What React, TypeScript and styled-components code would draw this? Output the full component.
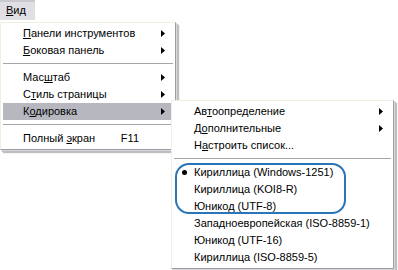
import React from 'react';
import styled, { createGlobalStyle } from 'styled-components';

const Global = createGlobalStyle`
  html, body { margin: 0; padding: 0; background: #fff; }
  body {
    font-family: "Liberation Sans", Arial, sans-serif;
    font-size: 11px;
    color: #000;
  }
`;

const Page = styled.div`
  position: relative;
  width: 398px;
  height: 270px;
  overflow: hidden;
  background: #fff;
`;

const MenuBar = styled.div`
  display: flex;
  height: 20px;
`;

const BarItem = styled.div`
  box-sizing: border-box;
  width: 35px;
  height: 20px;
  padding-left: 6px;
  background: #e0dfe3;
  border-top: 2px solid #c9c8ce;
  line-height: 17px;
`;

const Popup = styled.div<{ $left: number; $top: number; $width: number }>`
  position: absolute;
  left: ${p => p.$left}px;
  top: ${p => p.$top}px;
  width: ${p => p.$width}px;
  box-sizing: border-box;
  background: #fff;
  border: 1px solid;
  border-color: #f1efe2 #9d9da1 #9d9da1 #f1efe2;
  padding: 2px;
  display: flex;
  flex-direction: column;
  box-shadow: 1px 1px 0 #d8d7dc, 2px 2px 0 #bdbcc2, 3px 3px 1px rgba(0, 0, 0, 0.25);
`;

const Row = styled.div<{ $active?: boolean }>`
  display: grid;
  grid-template-columns: 20px 1fr auto 14px;
  align-items: center;
  height: 17px;
  line-height: 17px;
  white-space: nowrap;
  background: ${p => (p.$active ? '#b6b7bf' : 'transparent')};
`;

const Check = styled.span`
  display: flex;
  justify-content: center;
  align-items: center;
`;

const Dot = styled.span`
  width: 5px;
  height: 5px;
  border-radius: 50%;
  background: #000;
  margin-left: 1px;
`;

const Label = styled.span``;

const Shortcut = styled.span`
  padding-right: 20px;
`;

const ArrowCell = styled.span`
  display: flex;
  align-items: center;
  padding-left: 2px;
`;

const Separator = styled.div`
  height: 10px;
  display: flex;
  align-items: center;
  &::after {
    content: '';
    flex: 1;
    border-top: 1px solid #a6a6aa;
    border-bottom: 1px solid #fff;
  }
`;

const Ring = styled.div`
  position: absolute;
  left: 175px;
  top: 163px;
  width: 171px;
  height: 51px;
  box-sizing: border-box;
  border: 2px solid #2a74b8;
  border-radius: 14px;
  pointer-events: none;
`;

const Arrow = () => (
  <svg width="4" height="7" viewBox="0 0 4 7">
    <polygon points="0,0 4,3.5 0,7" fill="#000" />
  </svg>
);

type Item =
  | { sep: true }
  | {
      sep?: false;
      pre: string;
      u?: string;
      post?: string;
      sub?: boolean;
      key?: string;
      active?: boolean;
      dot?: boolean;
    };

const mainItems: Item[] = [
  { pre: '', u: 'П', post: 'анели инструментов', sub: true },
  { pre: '', u: 'Б', post: 'оковая панель', sub: true },
  { sep: true },
  { pre: 'Мас', u: 'ш', post: 'таб', sub: true },
  { pre: 'С', u: 'т', post: 'иль страницы', sub: true },
  { pre: 'К', u: 'о', post: 'дировка', sub: true, active: true },
  { sep: true },
  { pre: 'Полный ', u: 'э', post: 'кран', key: 'F11' },
];

const subItems: Item[] = [
  { pre: 'Ав', u: 'т', post: 'оопределение', sub: true },
  { pre: 'Д', u: 'о', post: 'полнительные', sub: true },
  { pre: 'Н', u: 'а', post: 'строить список...' },
  { sep: true },
  { pre: 'Кириллица (Windows-1251)', dot: true },
  { pre: 'Кириллица (KOI8-R)' },
  { pre: 'Юникод (UTF-8)' },
  { pre: 'Западноевропейская (ISO-8859-1)' },
  { pre: 'Юникод (UTF-16)' },
  { pre: 'Кириллица (ISO-8859-5)' },
];

const MenuList = ({ items }: { items: Item[] }) => (
  <>
    {items.map((it, i) =>
      it.sep ? (
        <Separator key={i} />
      ) : (
        <Row key={i} $active={it.active}>
          <Check>{it.dot ? <Dot /> : null}</Check>
          <Label>
            {it.pre}
            {it.u ? <u>{it.u}</u> : null}
            {it.post}
          </Label>
          <Shortcut>{it.key ?? ''}</Shortcut>
          <ArrowCell>{it.sub ? <Arrow /> : null}</ArrowCell>
        </Row>
      )
    )}
  </>
);

export default function App() {
  return (
    <Page>
      <Global />
      <MenuBar>
        <BarItem>
          <u>В</u>ид
        </BarItem>
      </MenuBar>
      <Popup $left={0} $top={22} $width={176}>
        <MenuList items={mainItems} />
      </Popup>
      <Popup $left={171} $top={100} $width={223}>
        <MenuList items={subItems} />
      </Popup>
      <Ring />
    </Page>
  );
}
